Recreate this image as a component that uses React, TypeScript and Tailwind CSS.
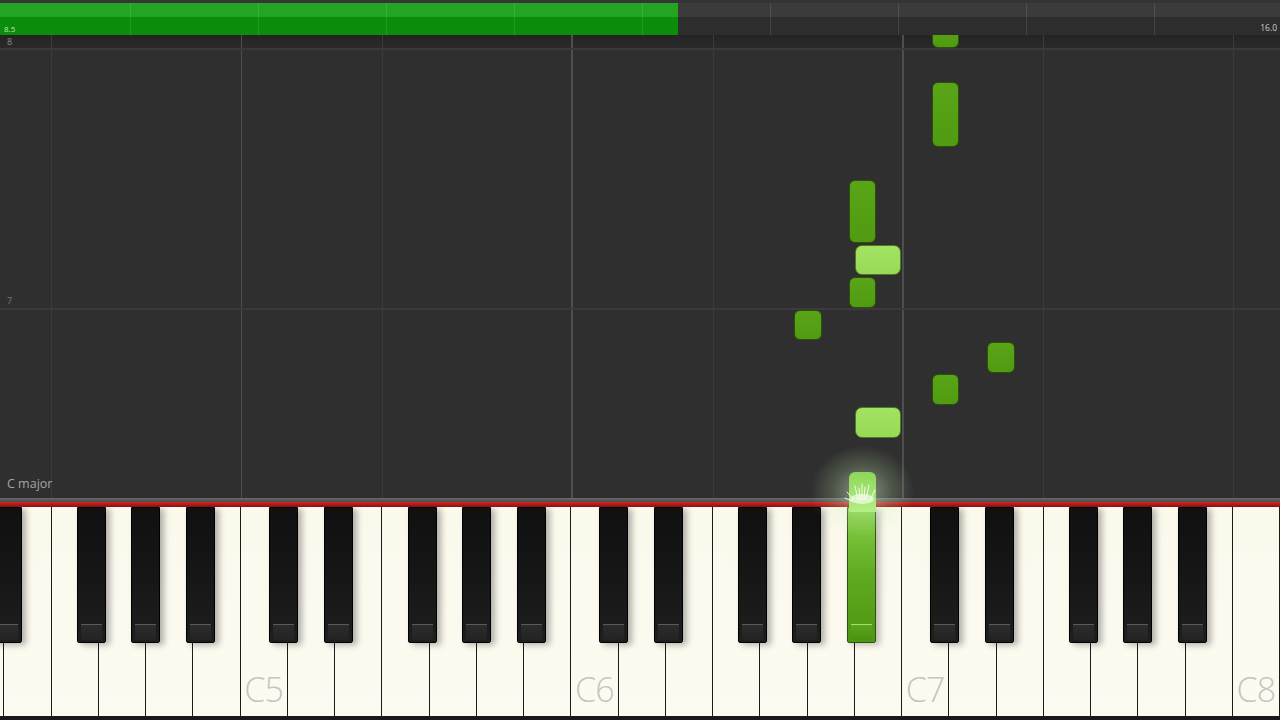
import React from "react";

const W = 47.26;
const OCT = 330.8;
const C5 = 240.6;
const blackOffsets = [42.4, 97.4, 181.4, 235.4, 290.4];
const ACTIVE = C5 + OCT + 290.4; // A#6 center

const whiteKeys: { label?: string }[] = [];
const names = ["D", "E", "F", "G", "A", "B", "C"];
let octave = 4;
for (let i = 0; i < 28; i++) {
  const n = names[i % 7];
  if (n === "C") octave++;
  whiteKeys.push({ label: n === "C" ? `C${octave}` : undefined });
}

const blackKeys: number[] = [];
for (let o = -1; o <= 2; o++) {
  const c = C5 + o * OCT;
  for (const off of blackOffsets) {
    const center = c + off;
    if (center + 15 > 0 && center - 15 < 1280) blackKeys.push(center);
  }
}

const notes = [
  { x: 932, y: -15, w: 27, h: 28, light: false },
  { x: 932, y: 47, w: 27, h: 65, light: false },
  { x: 849, y: 145, w: 27, h: 63, light: false },
  { x: 855, y: 210, w: 46, h: 30, light: true },
  { x: 849, y: 242, w: 27, h: 31, light: false },
  { x: 794, y: 275, w: 28, h: 30, light: false },
  { x: 987, y: 307, w: 28, h: 31, light: false },
  { x: 932, y: 339, w: 27, h: 31, light: false },
  { x: 855, y: 372, w: 46, h: 31, light: true },
];

const cLines = [240.6, 571.4, 902.2];
const fLines = [50.5, 382, 712.5, 1043.3, 1233];

function ProgressBar() {
  const segs = [130, 128, 128, 128, 128, 128, 128, 128, 128, 126];
  return (
    <div className="relative h-[32px] w-full overflow-hidden">
      <div className="absolute inset-0 flex flex-col">
        <div className="h-[14px] bg-[#3b3b3b]" />
        <div className="flex-1 bg-[#2d2d2d]" />
      </div>
      <div className="absolute left-0 top-0 bottom-0 flex flex-col" style={{ width: 678 }}>
        <div className="h-[14px] bg-[#22a522]" />
        <div className="flex-1 bg-[#0b8d0b]" />
      </div>
      <div className="absolute inset-0 flex">
        {segs.map((w, i) => (
          <div
            key={i}
            className={i === 0 ? "h-full" : "h-full border-l border-white/10"}
            style={{ width: w }}
          />
        ))}
      </div>
      <div className="relative flex h-full items-end justify-between px-[3px] pb-[2px] font-['Open_Sans',sans-serif] leading-none">
        <span className="pl-[1px] text-[8px] text-[#b8eeb0]">8.5</span>
        <span className="pb-[1px] text-[8.5px] text-[#cfcfcf]">16.0</span>
      </div>
    </div>
  );
}

function Roll() {
  return (
    <div className="relative flex-1 overflow-hidden bg-[#2f2f2f]">
      <div className="absolute left-0 right-0 top-0 h-[14px] bg-gradient-to-b from-black/25 to-black/10" />
      {fLines.map((x) => (
        <div key={x} className="absolute top-0 bottom-0 w-[1px] bg-[#3b3b3b]" style={{ left: x }} />
      ))}
      {cLines.map((x) => (
        <div key={x} className="absolute top-0 bottom-0 w-[1.5px] bg-[#4e4e4e]" style={{ left: x }} />
      ))}
      <div className="relative flex h-full flex-col font-['Open_Sans',sans-serif] leading-none">
        <div className="flex h-[15px] items-end border-b-2 border-[#3a3a3a] pb-[2px] pl-[7px]">
          <span className="text-[9px] text-[#8a8a8a]">8</span>
        </div>
        <div className="flex h-[260px] items-end border-b-2 border-[#3a3a3a] pb-[3px] pl-[7px]">
          <span className="text-[9px] text-[#7a7a7a]">7</span>
        </div>
        <div className="flex flex-1 items-end pb-[8px] pl-[7px]">
          <span className="text-[12.5px] text-[#a6a6a6]">C major</span>
        </div>
      </div>
      {notes.map((n, i) => (
        <div
          key={i}
          className={
            n.light
              ? "absolute rounded-[7px] border border-[#4f7a22] bg-gradient-to-b from-[#a2e362] to-[#98da56]"
              : "absolute rounded-[6px] border border-[#2c5209] bg-gradient-to-b from-[#59a417] to-[#519b12]"
          }
          style={{ left: n.x, top: n.y, width: n.w, height: n.h }}
        />
      ))}
    </div>
  );
}

function Keyboard() {
  return (
    <div className="relative h-[213px] w-full overflow-hidden bg-[#1a1a1a]">
      <div className="ml-[-43px] flex h-[209px]">
        {whiteKeys.map((k, i) => (
          <div
            key={i}
            className="flex h-full shrink-0 flex-col items-center justify-end border-r-[1.5px] border-[#1c1c1c] bg-gradient-to-b from-[#fbf8ec] to-[#fdfbf1] pb-[10px]"
            style={{ width: W }}
          >
            {k.label && (
              <span className="text-[34px] font-light leading-none tracking-[-1px] text-[#c6c6bd] font-['Open_Sans',sans-serif]">
                {k.label}
              </span>
            )}
          </div>
        ))}
      </div>
      {blackKeys.map((c) => {
        const active = Math.abs(c - ACTIVE) < 1;
        return (
          <div
            key={c}
            className={
              active
                ? "absolute top-0 flex h-[136px] w-[29px] flex-col justify-end rounded-b-[2px] border border-[#2f5210] bg-gradient-to-b from-[#86d048] via-[#5fab1f] to-[#4d9612] px-[3px] pb-[2px] shadow-[4px_2px_6px_rgba(0,0,0,0.25)]"
                : "absolute top-0 flex h-[136px] w-[29px] flex-col justify-end rounded-b-[2px] border border-black bg-gradient-to-b from-[#101010] via-[#161616] to-[#1e1e1e] px-[3px] pb-[2px] shadow-[4px_2px_6px_rgba(0,0,0,0.3)]"
            }
            style={{ left: c - 14.5 }}
          >
            <div
              className={
                active
                  ? "h-[16px] rounded-b-[2px] border-t border-[#a8e070] bg-gradient-to-b from-[#5aa81c] to-[#4a9012]"
                  : "h-[16px] rounded-b-[2px] border-t border-[#5a5a5a] bg-gradient-to-b from-[#2c2c2c] to-[#232323]"
              }
            />
          </div>
        );
      })}
    </div>
  );
}

export default function App() {
  return (
    <div className="relative flex h-[720px] w-[1280px] flex-col overflow-hidden bg-[#2f2f2f]">
      <div className="h-[3px] bg-[#353535]" />
      <ProgressBar />
      <Roll />
      <div className="h-[4px] bg-gradient-to-b from-[#6a6a6a] to-[#4a4a4a]" />
      <div className="h-[5px] bg-gradient-to-b from-[#d02828] to-[#8a1010]" />
      <Keyboard />
      {/* playing note with glow */}
      <div
        className="absolute left-[810px] top-[445px] h-[90px] w-[105px] rounded-full"
        style={{ background: "radial-gradient(ellipse at 50% 52%, rgba(235,255,215,0.5) 0%, rgba(200,240,180,0.2) 40%, rgba(0,0,0,0) 70%)" }}
      />
      <div className="absolute left-[849px] top-[472px] h-[40px] w-[27px] rounded-t-[6px] bg-gradient-to-b from-[#8fd658] to-[#b4ef86]" />
      <svg className="absolute left-[840px] top-[476px]" width="45" height="30" viewBox="0 0 45 30">
        <g stroke="#ffffff" strokeWidth="1" strokeLinecap="round" opacity="0.9">
          <line x1="22" y1="24" x2="22" y2="8" />
          <line x1="18" y1="24" x2="15" y2="10" />
          <line x1="26" y1="24" x2="29" y2="9" />
          <line x1="14" y1="24" x2="7" y2="16" />
          <line x1="30" y1="24" x2="35" y2="14" />
          <line x1="20" y1="24" x2="19" y2="12" />
          <line x1="24" y1="24" x2="25" y2="11" />
          <line x1="12" y1="25" x2="5" y2="22" />
        </g>
        <ellipse cx="22" cy="23" rx="12" ry="5" fill="#ffffff" opacity="0.6" />
      </svg>
    </div>
  );
}
